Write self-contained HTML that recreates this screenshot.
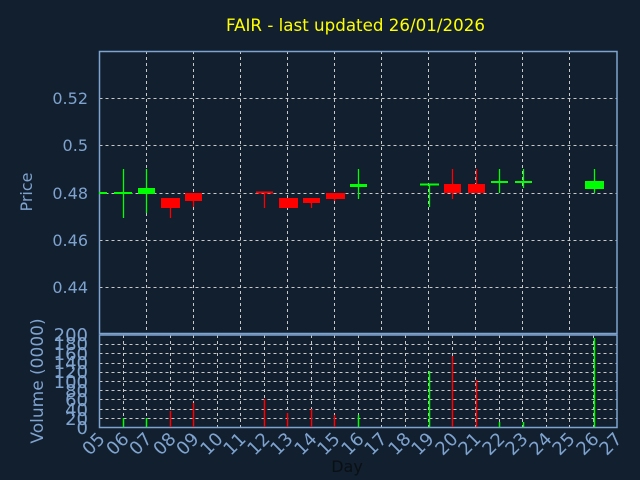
<!DOCTYPE html>
<html><head><style>
html,body{margin:0;padding:0;background:#111f2f;}
svg{display:block;font-family:"DejaVu Sans","Liberation Sans",sans-serif;}
</style></head><body>
<svg width="640" height="480" viewBox="0 0 640 480" xmlns="http://www.w3.org/2000/svg">
<rect width="640" height="480" fill="#111f2f"/>
<text x="226" y="31" font-size="17" fill="#ffff00" textLength="259" lengthAdjust="spacingAndGlyphs">FAIR - last updated 26/01/2026</text>
<g stroke="#c8c8c8" stroke-width="1" stroke-dasharray="3,3" fill="none">
<path d="M99.5 98.5H617M99.5 145.5H617M99.5 193.5H617M99.5 240.5H617M99.5 287.5H617"/>
<path d="M146.5 51V333M193.5 51V333M240.5 51V333M287.5 51V333M334.5 51V333M381.5 51V333M428.5 51V333M475.5 51V333M522.5 51V333M569.5 51V333"/>
<path d="M99.5 344.5H617M99.5 353.5H617M99.5 363.5H617M99.5 372.5H617M99.5 381.5H617M99.5 390.5H617M99.5 399.5H617M99.5 409.5H617M99.5 418.5H617"/>
<path d="M123.5 335V427M146.5 335V427M170.5 335V427M193.5 335V427M217.5 335V427M240.5 335V427M264.5 335V427M287.5 335V427M311.5 335V427M334.5 335V427M358.5 335V427M381.5 335V427M405.5 335V427M428.5 335V427M452.5 335V427M475.5 335V427M499.5 335V427M522.5 335V427M546.5 335V427M569.5 335V427M593.5 335V427"/>
</g>
<g stroke="#7fa3cf" stroke-width="1.5" fill="none">
<rect x="99.5" y="51.5" width="517.5" height="282"/>
<rect x="99.5" y="335" width="517.5" height="92.5"/>
</g>
<g stroke-width="1.3">
<rect x="99" y="192" width="8" height="2" fill="#00ff00"/>
<line x1="123.5" y1="169" x2="123.5" y2="218" stroke="#00ff00"/><rect x="114" y="192" width="18" height="2" fill="#00ff00"/>
<line x1="146.5" y1="169" x2="146.5" y2="213" stroke="#00ff00"/><rect x="138" y="188" width="17" height="6" fill="#00ff00"/>
<line x1="170.5" y1="198" x2="170.5" y2="218" stroke="#ff0000"/><rect x="161" y="198" width="19" height="10" fill="#ff0000"/>
<line x1="193.5" y1="193" x2="193.5" y2="207" stroke="#ff0000"/><rect x="185" y="193" width="17" height="8" fill="#ff0000"/>
<line x1="264.5" y1="192" x2="264.5" y2="208" stroke="#ff0000"/><rect x="256" y="191.5" width="17" height="2" fill="#ff0000"/>
<rect x="279" y="198" width="19" height="10" fill="#ff0000"/>
<line x1="311.5" y1="198" x2="311.5" y2="208" stroke="#ff0000"/><rect x="303" y="198" width="17" height="5" fill="#ff0000"/>
<line x1="334.5" y1="193" x2="334.5" y2="201" stroke="#ff0000"/><rect x="326" y="193" width="19" height="6" fill="#ff0000"/>
<line x1="358.5" y1="169" x2="358.5" y2="199" stroke="#00ff00"/><rect x="350" y="184" width="17" height="3" fill="#00ff00"/>
<line x1="429.5" y1="184" x2="429.5" y2="207" stroke="#00ff00"/><rect x="420" y="183.5" width="19" height="2" fill="#00ff00"/>
<line x1="452.5" y1="169" x2="452.5" y2="199" stroke="#ff0000"/><rect x="444" y="184" width="17" height="9" fill="#ff0000"/>
<line x1="476.5" y1="169" x2="476.5" y2="193" stroke="#ff0000"/><rect x="468" y="184" width="17" height="9" fill="#ff0000"/>
<line x1="499.5" y1="169" x2="499.5" y2="193" stroke="#00ff00"/><rect x="491" y="181" width="17" height="2" fill="#00ff00"/>
<line x1="523.5" y1="169" x2="523.5" y2="188" stroke="#00ff00"/><rect x="515" y="181" width="17" height="2" fill="#00ff00"/>
<line x1="594.5" y1="169" x2="594.5" y2="193" stroke="#00ff00"/><rect x="585" y="181" width="19" height="8" fill="#00ff00"/>
</g>
<g stroke-width="1.5">
<line x1="123.5" y1="418" x2="123.5" y2="427" stroke="#00ff00"/>
<line x1="146.5" y1="418" x2="146.5" y2="427" stroke="#00ff00"/>
<line x1="170.5" y1="411" x2="170.5" y2="427" stroke="#ff0000"/>
<line x1="193.5" y1="403" x2="193.5" y2="427" stroke="#ff0000"/>
<line x1="264.5" y1="399" x2="264.5" y2="427" stroke="#ff0000"/>
<line x1="287.5" y1="413" x2="287.5" y2="427" stroke="#ff0000"/>
<line x1="311.5" y1="409" x2="311.5" y2="427" stroke="#ff0000"/>
<line x1="334.5" y1="415" x2="334.5" y2="427" stroke="#ff0000"/>
<line x1="358.5" y1="415" x2="358.5" y2="427" stroke="#00ff00"/>
<line x1="429.5" y1="371" x2="429.5" y2="427" stroke="#00ff00"/>
<line x1="452.5" y1="356" x2="452.5" y2="427" stroke="#ff0000"/>
<line x1="476.5" y1="380" x2="476.5" y2="427" stroke="#ff0000"/>
<line x1="499.5" y1="422" x2="499.5" y2="427" stroke="#00ff00"/>
<line x1="523.5" y1="422" x2="523.5" y2="427" stroke="#00ff00"/>
<line x1="594.5" y1="338" x2="594.5" y2="427" stroke="#00ff00"/>
</g>
<g fill="#7fa3cf" font-size="16">
<text x="88" y="104" text-anchor="end">0.52</text>
<text x="88" y="151" text-anchor="end">0.5</text>
<text x="88" y="199" text-anchor="end">0.48</text>
<text x="88" y="246" text-anchor="end">0.46</text>
<text x="88" y="293" text-anchor="end">0.44</text>
<text transform="translate(32,192) rotate(-90)" text-anchor="middle">Price</text>
<text transform="translate(43,381) rotate(-90)" text-anchor="middle" font-size="17">Volume (0000)</text>
<g text-anchor="end" font-size="18">
<text x="88" y="341">200</text><text x="88" y="350">180</text><text x="88" y="360">160</text><text x="88" y="369">140</text><text x="88" y="378">120</text><text x="88" y="388">100</text><text x="88" y="397">80</text><text x="88" y="406">60</text><text x="88" y="416">40</text><text x="88" y="425">20</text><text x="88" y="434">0</text>
</g>
<g text-anchor="end" font-size="18">
<text transform="translate(106,440) rotate(-45)">05</text>
<text transform="translate(130,440) rotate(-45)">06</text>
<text transform="translate(153,440) rotate(-45)">07</text>
<text transform="translate(177,440) rotate(-45)">08</text>
<text transform="translate(200,440) rotate(-45)">09</text>
<text transform="translate(224,440) rotate(-45)">10</text>
<text transform="translate(247,440) rotate(-45)">11</text>
<text transform="translate(271,440) rotate(-45)">12</text>
<text transform="translate(294,440) rotate(-45)">13</text>
<text transform="translate(318,440) rotate(-45)">14</text>
<text transform="translate(341,440) rotate(-45)">15</text>
<text transform="translate(365,440) rotate(-45)">16</text>
<text transform="translate(388,440) rotate(-45)">17</text>
<text transform="translate(412,440) rotate(-45)">18</text>
<text transform="translate(435,440) rotate(-45)">19</text>
<text transform="translate(459,440) rotate(-45)">20</text>
<text transform="translate(482,440) rotate(-45)">21</text>
<text transform="translate(506,440) rotate(-45)">22</text>
<text transform="translate(529,440) rotate(-45)">23</text>
<text transform="translate(553,440) rotate(-45)">24</text>
<text transform="translate(576,440) rotate(-45)">25</text>
<text transform="translate(600,440) rotate(-45)">26</text>
<text transform="translate(623,440) rotate(-45)">27</text>
</g>
</g>
<text x="347" y="472" text-anchor="middle" font-size="16" fill="#0a0f14">Day</text>
</svg>
</body></html>
